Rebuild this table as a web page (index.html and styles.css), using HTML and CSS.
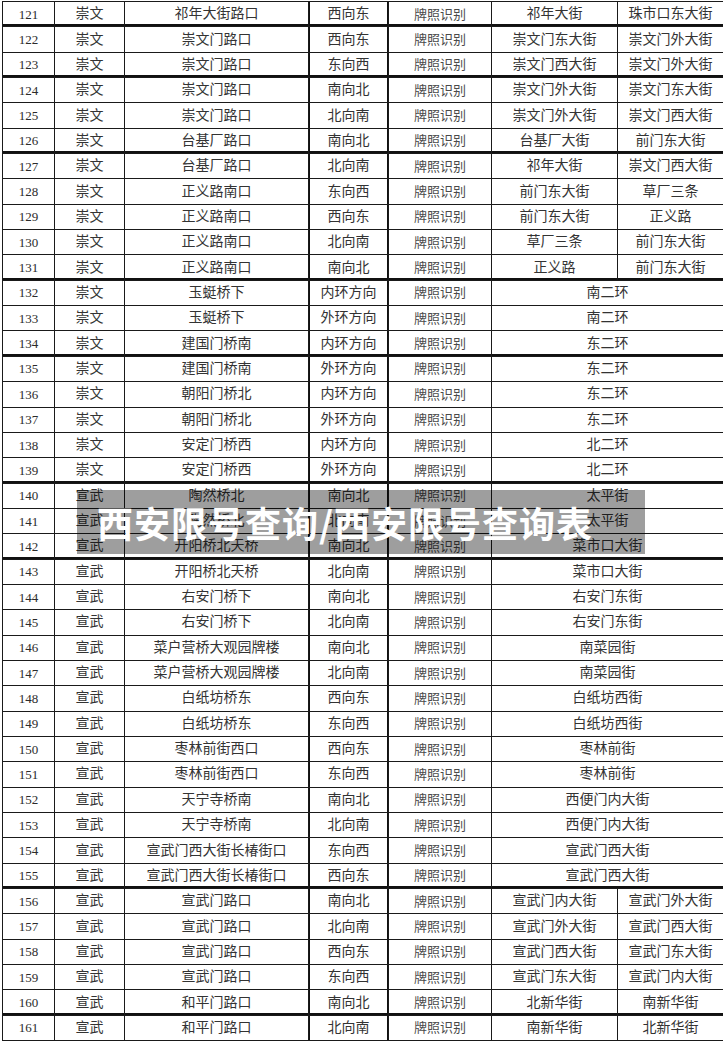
FILE: index.html
```html
<!DOCTYPE html>
<html lang="zh-CN">
<head>
<meta charset="utf-8">
<title>西安限号查询/西安限号查询表</title>
<link rel="stylesheet" href="styles.css">
</head>
<body>
<div class="page">
<table class="grid">
<colgroup>
<col class="c1"><col class="c2"><col class="c3"><col class="c4"><col class="c5"><col class="c6"><col class="c7">
</colgroup>
<tbody>
<tr class="thick"><td class="num">121</td><td>崇文</td><td>祁年大街路口</td><td class="dir">西向东</td><td class="kind">牌照识别</td><td>祁年大街</td><td>珠市口东大街</td></tr>
<tr><td class="num">122</td><td>崇文</td><td>崇文门路口</td><td class="dir">西向东</td><td class="kind">牌照识别</td><td>崇文门东大街</td><td>崇文门外大街</td></tr>
<tr class="thick"><td class="num">123</td><td>崇文</td><td>崇文门路口</td><td class="dir">东向西</td><td class="kind">牌照识别</td><td>崇文门西大街</td><td>崇文门外大街</td></tr>
<tr><td class="num">124</td><td>崇文</td><td>崇文门路口</td><td class="dir">南向北</td><td class="kind">牌照识别</td><td>崇文门外大街</td><td>崇文门东大街</td></tr>
<tr><td class="num">125</td><td>崇文</td><td>崇文门路口</td><td class="dir">北向南</td><td class="kind">牌照识别</td><td>崇文门外大街</td><td>崇文门西大街</td></tr>
<tr class="thick"><td class="num">126</td><td>崇文</td><td>台基厂路口</td><td class="dir">南向北</td><td class="kind">牌照识别</td><td>台基厂大街</td><td>前门东大街</td></tr>
<tr><td class="num">127</td><td>崇文</td><td>台基厂路口</td><td class="dir">北向南</td><td class="kind">牌照识别</td><td>祁年大街</td><td>崇文门西大街</td></tr>
<tr><td class="num">128</td><td>崇文</td><td>正义路南口</td><td class="dir">东向西</td><td class="kind">牌照识别</td><td>前门东大街</td><td>草厂三条</td></tr>
<tr><td class="num">129</td><td>崇文</td><td>正义路南口</td><td class="dir">西向东</td><td class="kind">牌照识别</td><td>前门东大街</td><td>正义路</td></tr>
<tr><td class="num">130</td><td>崇文</td><td>正义路南口</td><td class="dir">北向南</td><td class="kind">牌照识别</td><td>草厂三条</td><td>前门东大街</td></tr>
<tr class="thick"><td class="num">131</td><td>崇文</td><td>正义路南口</td><td class="dir">南向北</td><td class="kind">牌照识别</td><td>正义路</td><td>前门东大街</td></tr>
<tr><td class="num">132</td><td>崇文</td><td>玉蜓桥下</td><td class="dir">内环方向</td><td class="kind">牌照识别</td><td colspan="2">南二环</td></tr>
<tr><td class="num">133</td><td>崇文</td><td>玉蜓桥下</td><td class="dir">外环方向</td><td class="kind">牌照识别</td><td colspan="2">南二环</td></tr>
<tr class="thick"><td class="num">134</td><td>崇文</td><td>建国门桥南</td><td class="dir">内环方向</td><td class="kind">牌照识别</td><td colspan="2">东二环</td></tr>
<tr><td class="num">135</td><td>崇文</td><td>建国门桥南</td><td class="dir">外环方向</td><td class="kind">牌照识别</td><td colspan="2">东二环</td></tr>
<tr><td class="num">136</td><td>崇文</td><td>朝阳门桥北</td><td class="dir">内环方向</td><td class="kind">牌照识别</td><td colspan="2">东二环</td></tr>
<tr><td class="num">137</td><td>崇文</td><td>朝阳门桥北</td><td class="dir">外环方向</td><td class="kind">牌照识别</td><td colspan="2">东二环</td></tr>
<tr><td class="num">138</td><td>崇文</td><td>安定门桥西</td><td class="dir">内环方向</td><td class="kind">牌照识别</td><td colspan="2">北二环</td></tr>
<tr class="thick"><td class="num">139</td><td>崇文</td><td>安定门桥西</td><td class="dir">外环方向</td><td class="kind">牌照识别</td><td colspan="2">北二环</td></tr>
<tr><td class="num">140</td><td>宣武</td><td>陶然桥北</td><td class="dir">南向北</td><td class="kind">牌照识别</td><td colspan="2">太平街</td></tr>
<tr><td class="num">141</td><td>宣武</td><td>陶然桥北</td><td class="dir">北向南</td><td class="kind">牌照识别</td><td colspan="2">太平街</td></tr>
<tr class="thick"><td class="num">142</td><td>宣武</td><td>开阳桥北天桥</td><td class="dir">南向北</td><td class="kind">牌照识别</td><td colspan="2">菜市口大街</td></tr>
<tr><td class="num">143</td><td>宣武</td><td>开阳桥北天桥</td><td class="dir">北向南</td><td class="kind">牌照识别</td><td colspan="2">菜市口大街</td></tr>
<tr><td class="num">144</td><td>宣武</td><td>右安门桥下</td><td class="dir">南向北</td><td class="kind">牌照识别</td><td colspan="2">右安门东街</td></tr>
<tr><td class="num">145</td><td>宣武</td><td>右安门桥下</td><td class="dir">北向南</td><td class="kind">牌照识别</td><td colspan="2">右安门东街</td></tr>
<tr><td class="num">146</td><td>宣武</td><td>菜户营桥大观园牌楼</td><td class="dir">南向北</td><td class="kind">牌照识别</td><td colspan="2">南菜园街</td></tr>
<tr><td class="num">147</td><td>宣武</td><td>菜户营桥大观园牌楼</td><td class="dir">北向南</td><td class="kind">牌照识别</td><td colspan="2">南菜园街</td></tr>
<tr><td class="num">148</td><td>宣武</td><td>白纸坊桥东</td><td class="dir">西向东</td><td class="kind">牌照识别</td><td colspan="2">白纸坊西街</td></tr>
<tr><td class="num">149</td><td>宣武</td><td>白纸坊桥东</td><td class="dir">东向西</td><td class="kind">牌照识别</td><td colspan="2">白纸坊西街</td></tr>
<tr><td class="num">150</td><td>宣武</td><td>枣林前街西口</td><td class="dir">西向东</td><td class="kind">牌照识别</td><td colspan="2">枣林前街</td></tr>
<tr><td class="num">151</td><td>宣武</td><td>枣林前街西口</td><td class="dir">东向西</td><td class="kind">牌照识别</td><td colspan="2">枣林前街</td></tr>
<tr><td class="num">152</td><td>宣武</td><td>天宁寺桥南</td><td class="dir">南向北</td><td class="kind">牌照识别</td><td colspan="2">西便门内大街</td></tr>
<tr><td class="num">153</td><td>宣武</td><td>天宁寺桥南</td><td class="dir">北向南</td><td class="kind">牌照识别</td><td colspan="2">西便门内大街</td></tr>
<tr><td class="num">154</td><td>宣武</td><td>宣武门西大街长椿街口</td><td class="dir">东向西</td><td class="kind">牌照识别</td><td colspan="2">宣武门西大街</td></tr>
<tr class="thick"><td class="num">155</td><td>宣武</td><td>宣武门西大街长椿街口</td><td class="dir">西向东</td><td class="kind">牌照识别</td><td colspan="2">宣武门西大街</td></tr>
<tr><td class="num">156</td><td>宣武</td><td>宣武门路口</td><td class="dir">南向北</td><td class="kind">牌照识别</td><td>宣武门内大街</td><td>宣武门外大街</td></tr>
<tr><td class="num">157</td><td>宣武</td><td>宣武门路口</td><td class="dir">北向南</td><td class="kind">牌照识别</td><td>宣武门外大街</td><td>宣武门西大街</td></tr>
<tr><td class="num">158</td><td>宣武</td><td>宣武门路口</td><td class="dir">西向东</td><td class="kind">牌照识别</td><td>宣武门西大街</td><td>宣武门东大街</td></tr>
<tr><td class="num">159</td><td>宣武</td><td>宣武门路口</td><td class="dir">东向西</td><td class="kind">牌照识别</td><td>宣武门东大街</td><td>宣武门内大街</td></tr>
<tr class="thick"><td class="num">160</td><td>宣武</td><td>和平门路口</td><td class="dir">南向北</td><td class="kind">牌照识别</td><td>北新华街</td><td>南新华街</td></tr>
<tr><td class="num">161</td><td>宣武</td><td>和平门路口</td><td class="dir">北向南</td><td class="kind">牌照识别</td><td>南新华街</td><td>北新华街</td></tr>
</tbody>
</table>
<div class="banner">西安限号查询/西安限号查询表</div>
</div>
</body>
</html>
```

FILE: styles.css
```css
html, body {
  margin: 0;
  padding: 0;
  background: #ffffff;
}

.page {
  position: relative;
  width: 723px;
  height: 1045px;
  overflow: hidden;
  padding: 1px 0 0 2px;
  box-sizing: border-box;
}

.grid {
  border-collapse: collapse;
  table-layout: fixed;
  width: 721px;
  font-family: "Liberation Serif", "Noto Sans CJK SC", serif;
  font-size: 14px;
  color: #333333;
}

.c1 { width: 52px; }
.c2 { width: 70px; }
.c3 { width: 184px; }
.c4 { width: 80px; }
.c5 { width: 103px; }
.c6 { width: 126px; }
.c7 { width: 106px; }

.grid tr {
  height: 25.35px;
}

.grid td {
  height: 24.35px;
  padding: 0;
  border: 1px solid #1a1a1a;
  text-align: center;
  vertical-align: middle;
  white-space: nowrap;
  overflow: hidden;
  line-height: 1;
  font-weight: 400;
}

.grid td.num {
  font-family: "Liberation Serif", serif;
  font-size: 13px;
  color: #2b2b2b;
}

.grid td.dir {
  box-shadow: inset 1px 0 0 #111111, inset -1px 0 0 #111111;
}

.grid td.kind {
  color: #4a4a4a;
  font-size: 13px;
}

.grid tr.thick td {
  box-shadow: inset 0 -2px 0 #111111;
}

.grid tr.thick td.dir {
  box-shadow: inset 1px 0 0 #111111, inset -1px 0 0 #111111, inset 0 -2px 0 #111111;
}

.banner {
  position: absolute;
  left: 77px;
  top: 490px;
  width: 568px;
  height: 64px;
  box-sizing: border-box;
  padding-left: 20px;
  display: flex;
  align-items: center;
  background: rgba(0, 0, 0, 0.38);
  color: #ffffff;
  font-family: "Noto Sans CJK SC", "Noto Sans", sans-serif;
  font-weight: 700;
  font-size: 36px;
  letter-spacing: 1px;
  white-space: nowrap;
}
```
